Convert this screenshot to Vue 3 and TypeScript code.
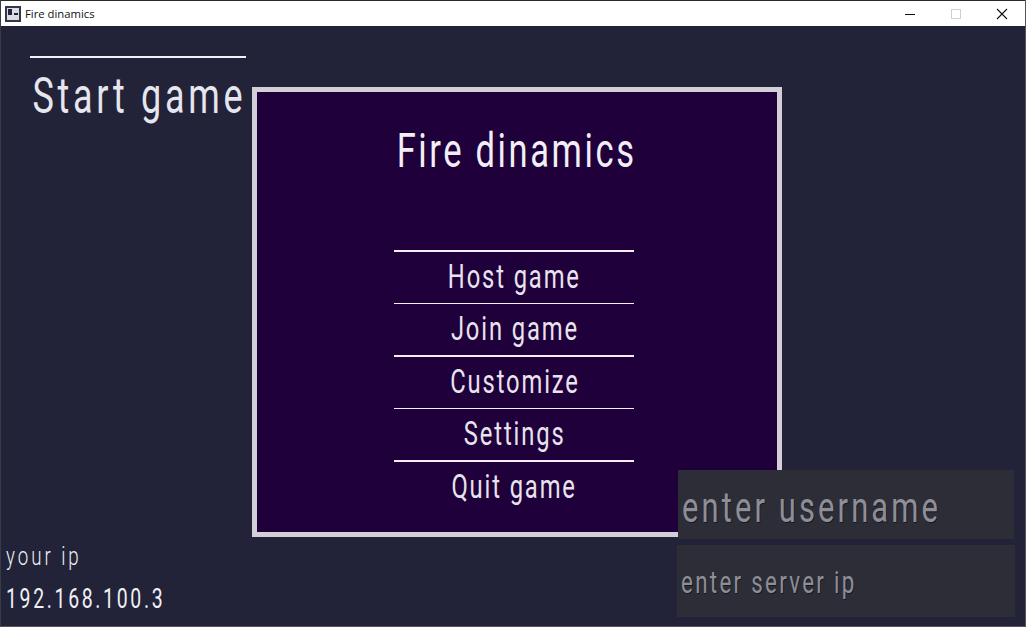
<script setup lang="ts">
const menu: string[] = ['Host game', 'Join game', 'Customize', 'Settings', 'Quit game']
</script>

<template>
  <div class="window">
    <header class="titlebar">
      <svg class="app-icon" width="16" height="16" viewBox="0 0 16 16">
        <rect x="0" y="0" width="16" height="16" fill="#35354a" />
        <rect x="2" y="2" width="12" height="12" fill="#dcdce4" />
        <rect x="3" y="3" width="4" height="6" fill="#23233a" />
        <rect x="9" y="7" width="4" height="2" fill="#23233a" />
      </svg>
      <span class="app-title">Fire dinamics</span>
      <div class="controls">
        <span class="control">
          <svg width="12" height="12" viewBox="0 0 12 12"><path d="M1 6.5h10" stroke="#111" stroke-width="1" /></svg>
        </span>
        <span class="control">
          <svg width="12" height="12" viewBox="0 0 12 12"><rect x="1.5" y="1.5" width="9" height="9" fill="none" stroke="#d0d0d0" /></svg>
        </span>
        <span class="control">
          <svg width="12" height="12" viewBox="0 0 12 12"><path d="M1 1l10 10M11 1L1 11" stroke="#111" stroke-width="1.1" /></svg>
        </span>
      </div>
    </header>

    <main class="stage">
      <aside class="side">
        <button class="start">
          <span class="txt start-txt">Start game</span>
        </button>
        <div class="ip">
          <span class="txt ip-label">your ip</span>
          <span class="txt ip-value">192.168.100.3</span>
        </div>
      </aside>

      <section class="panel">
        <h1 class="txt heading">Fire dinamics</h1>
        <nav class="menu">
          <button v-for="(item, i) in menu" :key="item" class="item" :class="{ thin: i % 2 === 1 }">
            <span class="txt item-txt">{{ item }}</span>
          </button>
        </nav>
      </section>

      <form class="inputs" @submit.prevent>
        <div class="field user"><span class="txt user-txt">enter username</span></div>
        <div class="field server"><span class="txt server-txt">enter server ip</span></div>
      </form>
    </main>
  </div>
</template>

<style>
html, body { margin: 0; background: #222238; overflow: hidden; }
</style>

<style scoped>
.window {
  width: 1026px;
  height: 627px;
  box-sizing: border-box;
  display: flex;
  flex-direction: column;
  background: #222238;
  border-left: 1px solid #3a3a44;
  border-right: 1px solid #55555f;
  border-bottom: 1px solid #55555f;
  font-family: Roboto, "Liberation Sans", sans-serif;
  overflow: hidden;
}
.titlebar {
  height: 26px;
  flex: none;
  box-sizing: border-box;
  border-top: 1px solid #2b2b2b;
  background: #fff;
  display: flex;
  align-items: center;
  padding-left: 4px;
  color: #111;
}
.app-icon { flex: none; }
.app-title { margin-left: 4px; font-family: "Open Sans", "Liberation Sans", sans-serif; font-size: 11.3px; }
.controls { margin-left: auto; display: flex; }
.control { width: 46px; height: 25px; display: flex; align-items: center; justify-content: center; }

.stage {
  position: relative;
  flex: 1;
  display: flex;
  min-height: 0;
}
.txt {
  display: inline-block;
  white-space: nowrap;
  font-weight: 400;
  transform: scaleX(0.72);
}
.side {
  width: 251px;
  flex: none;
  display: flex;
  flex-direction: column;
  justify-content: space-between;
  padding-top: 30px;
  box-sizing: border-box;
}
button {
  font: inherit;
  background: none;
  color: inherit;
  border: 0;
  padding: 0;
}
.start {
  margin-left: 29px;
  width: 216px;
  height: 70px;
  box-sizing: border-box;
  border-top: 2px solid #f2f2f6;
  color: #e6e6ee;
  display: flex;
  justify-content: center;
  align-items: center;
  padding: 8px 0 0 3px;
}
.start-txt { font-size: 50px; letter-spacing: 5.1px; }
.ip {
  display: flex;
  flex-direction: column;
  padding: 0 0 11px 5px;
  color: #f0f0f4;
}
.ip-label, .ip-value { transform-origin: left center; align-self: flex-start; font-weight: 300; }
.ip-label { font-size: 26px; letter-spacing: 4.1px; }
.ip-value { font-size: 27px; letter-spacing: 3.7px; margin-top: 12px; font-weight: 400; }

.panel {
  width: 530px;
  height: 450px;
  margin-top: 61px;
  box-sizing: border-box;
  border: 5px solid #d2cfd6;
  background: #20003a;
  display: flex;
  flex-direction: column;
  align-items: center;
  color: #f2eef6;
}
.heading {
  margin: 28px 0 0 0;
  font-size: 48px;
  line-height: 62px;
  letter-spacing: 3.6px;
}
.menu {
  margin-top: 68px;
  margin-left: -7px;
  width: 240px;
  display: flex;
  flex-direction: column;
}
.item {
  height: 53px;
  box-sizing: border-box;
  border-top: 2px solid #f2eef6;
  padding: 0 0 2px 2px;
  display: flex;
  justify-content: center;
  align-items: center;
  color: #e8e4ee;
}
.item.thin { height: 52px; border-top-width: 1px; }
.item-txt { font-size: 33px; letter-spacing: 2.6px; }

.inputs {
  position: absolute;
  left: 676px;
  top: 444px;
  width: 338px;
  display: flex;
  flex-direction: column;
  gap: 6px;
  color: #8e8e96;
}
.field {
  background: #2d2d38;
  display: flex;
  align-items: center;
  overflow: hidden;
}
.user { height: 69px; margin: 0 1px; padding: 4px 0 0 4px; box-sizing: border-box; }
.server { height: 72px; padding: 2px 0 0 4px; box-sizing: border-box; }
.user-txt, .server-txt { transform-origin: left center; text-shadow: 1px 1px 0 #17171f; }
.user-txt { font-size: 43px; letter-spacing: 4.3px; }
.server-txt { font-size: 31px; letter-spacing: 3.2px; }
</style>
